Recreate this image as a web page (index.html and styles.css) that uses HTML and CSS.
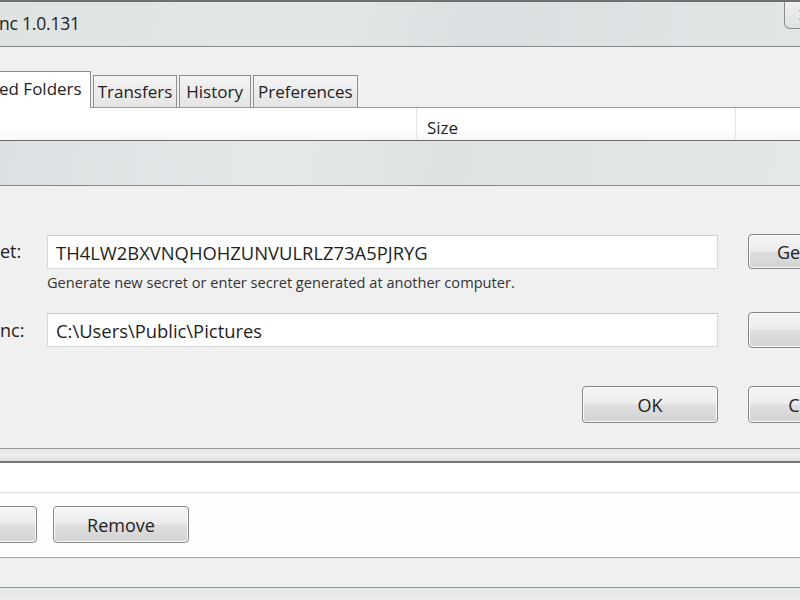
FILE: index.html
```html
<!DOCTYPE html>
<html lang="en">
<head>
    <meta charset="UTF-8">
    <title>BitTorrent Sync 1.0.131</title>
    <link rel="stylesheet" href="styles.css">
</head>
<body>

<div class="window">
    <div class="titlebar">
        <span class="title">nc 1.0.131</span>
        <div class="close">
            <svg width="20" height="14" viewBox="0 0 20 14">
                <path d="M5 2 L13 12 M13 2 L5 12" stroke="#444" stroke-width="2" fill="none"/>
            </svg>
        </div>
    </div>

    <div class="tabbar">
        <div class="tab active">ed Folders</div>
        <div class="tab">Transfers</div>
        <div class="tab tab-wide">History</div>
        <div class="tab">Preferences</div>
    </div>

    <div class="list-header">
        <div class="col col-name"></div>
        <div class="col col-size">Size</div>
        <div class="col col-rest"></div>
    </div>

    <!-- add folder dialog -->
    <div class="dialog">
        <div class="dlg-title"></div>
        <div class="dlg-body">
            <div class="row">
                <label class="lbl" for="secret">et:</label>
                <div class="field">
                    <input class="text" id="secret" type="text" readonly value="TH4LW2BXVNQHOHZUNVULRLZ73A5PJRYG">
                    <div class="hint">Generate new secret or enter secret generated at another computer.</div>
                </div>
                <button class="btn btn-side">Generate</button>
            </div>
            <div class="row row-folder">
                <label class="lbl" for="folder">nc:</label>
                <div class="field">
                    <input class="text" id="folder" type="text" readonly value="C:\Users\Public\Pictures">
                </div>
                <button class="btn btn-side btn-tall">...</button>
            </div>
            <div class="row row-actions">
                <div class="actions">
                    <button class="btn btn-dlg">OK</button>
                </div>
                <button class="btn btn-dlg btn-cancel">Cancel</button>
            </div>
        </div>
        <div class="dlg-frame"></div>
    </div>

    <div class="list-area"></div>
    <div class="button-row">
        <button class="btn btn-main btn-add">Add</button>
        <button class="btn btn-main">Remove</button>
    </div>
    <div class="statusbar"></div>
    <div class="bottom"></div>
</div>

</body>
</html>
```

FILE: styles.css
```css
html, body {
    margin: 0;
    padding: 0;
    width: 800px;
    height: 600px;
    overflow: hidden;
    background: #e9ecec;
}
.window {
    width: 800px;
    font-family: "Open Sans", "Noto Sans", sans-serif;
    color: #1e1e1e;
}
.titlebar {
    display: flex;
    justify-content: space-between;
    align-items: flex-start;
    height: 44px;
    border-top: 2px solid #707070;
    border-bottom: 1px solid #8a8a8a;
    background: linear-gradient(100deg, #dfe2e3 0%, #e4e7e8 40%, #dcdfe1 60%, #e2e5e6 100%);
}
.title {
    font-size: 17.5px;
    line-height: 43px;
    margin-left: -1px;
    letter-spacing: -0.2px;
    color: #222;
}
.close {
    width: 44px;
    height: 27px;
    margin-right: -28px;
    border: 1px solid #8a8a8a;
    border-top: none;
    border-radius: 0 0 0 6px;
    background: linear-gradient(#eef0f0, #dfe2e3);
    display: flex;
    align-items: center;
    padding-left: 10px;
    box-sizing: border-box;
}
.tabbar {
    display: flex;
    align-items: flex-end;
    height: 61px;
    box-sizing: border-box;
    background: #f0f0f0;
    border-bottom: 1px solid #9a9a9a;
}
.tab {
    font-size: 17px;
    height: 31px;
    line-height: 31px;
    padding: 0 4px;
    margin-left: 2px;
    border: 1px solid #8e8e8e;
    border-bottom: none;
    background: linear-gradient(#f4f4f4, #e4e4e4);
    color: #222;
}
.tab-wide {
    padding: 0 7px 0 6px;
}
.tab.active {
    height: 36px;
    line-height: 34px;
    margin-left: -1px;
    margin-bottom: -1px;
    padding: 0 8px 0 0;
    border-left: none;
    background: #fff;
}
.list-header {
    display: flex;
    height: 32px;
    background: linear-gradient(#ffffff 60%, #f6f7f7);
}
.col {
    font-size: 17px;
    line-height: 40px;
    border-right: 1px solid #e4e4e4;
}
.col-name {
    width: 416px;
}
.col-size {
    width: 308px;
    padding-left: 10px;
}
.col-rest {
    flex: 1;
    border-right: none;
}
.dialog {
    border-top: 1px solid #6e6e6e;
}
.dlg-title {
    height: 44px;
    border-bottom: 1px solid #8a8a8a;
    background: linear-gradient(100deg, #dde0e2 0%, #e6e9ea 35%, #dee2e3 55%, #e5e8e9 100%);
}
.dlg-body {
    height: 263px;
    box-sizing: border-box;
    padding-top: 48px;
    background: #f0f0f0;
    border-bottom: 1px solid #9a9a9a;
}
.row {
    display: flex;
    align-items: flex-start;
}
.lbl {
    width: 47px;
    flex-shrink: 0;
    text-align: left;
    font-size: 18px;
    line-height: 35px;
    color: #222;
}
.field {
    width: 671px;
    flex-shrink: 0;
}
.text {
    display: block;
    width: 671px;
    height: 34px;
    margin: 1px 0 0 0;
    box-sizing: border-box;
    padding: 0 8px;
    border: 1px solid #d6d8db;
    border-top-color: #c6c8cc;
    background: #fff;
    font-family: "Open Sans", "Noto Sans", sans-serif;
    font-size: 18.4px;
    color: #1e1e1e;
    outline: none;
}
.hint {
    margin-top: 4px;
    font-size: 14.6px;
    line-height: 18px;
    color: #333;
}
.btn {
    flex-shrink: 0;
    width: 136px;
    box-sizing: border-box;
    border: 1px solid #858585;
    border-radius: 4px;
    background: linear-gradient(#f5f5f5 0%, #ececec 48%, #dedede 52%, #d3d3d3 100%);
    box-shadow: inset 0 0 0 1px #fbfbfb;
    font-family: "Open Sans", "Noto Sans", sans-serif;
    font-size: 18px;
    color: #222;
    padding: 0;
}
.btn-side {
    height: 35px;
    margin-left: 30px;
}
.btn-tall {
    height: 36px;
}
.row-folder {
    margin-top: 21px;
}
.row-folder .lbl {
    line-height: 36px;
}
.row-actions {
    margin-top: 38px;
    padding-left: 47px;
}
.actions {
    width: 671px;
    flex-shrink: 0;
    display: flex;
    justify-content: flex-end;
}
.btn-dlg {
    height: 37px;
}
.btn-cancel {
    margin-left: 30px;
}
.dlg-frame {
    height: 12px;
    border-bottom: 2px solid #777;
    background: linear-gradient(#e3e6e7, #eceeef 50%, #dcdfe0);
}
.list-area {
    height: 29px;
    background: #fff;
    border-bottom: 1px solid #dedede;
}
.button-row {
    display: flex;
    align-items: flex-start;
    height: 65px;
    box-sizing: border-box;
    padding-top: 13px;
    background: #fdfdfd;
    border-bottom: 1px solid #a6a6a6;
}
.btn-main {
    height: 37px;
}
.btn-add {
    margin-left: -99px;
    margin-right: 16px;
}
.statusbar {
    height: 29px;
    background: #f0f0f0;
    border-bottom: 1px solid #999;
}
.bottom {
    height: 20px;
    background: linear-gradient(#e4e7e8, #eef0f0);
}
```
